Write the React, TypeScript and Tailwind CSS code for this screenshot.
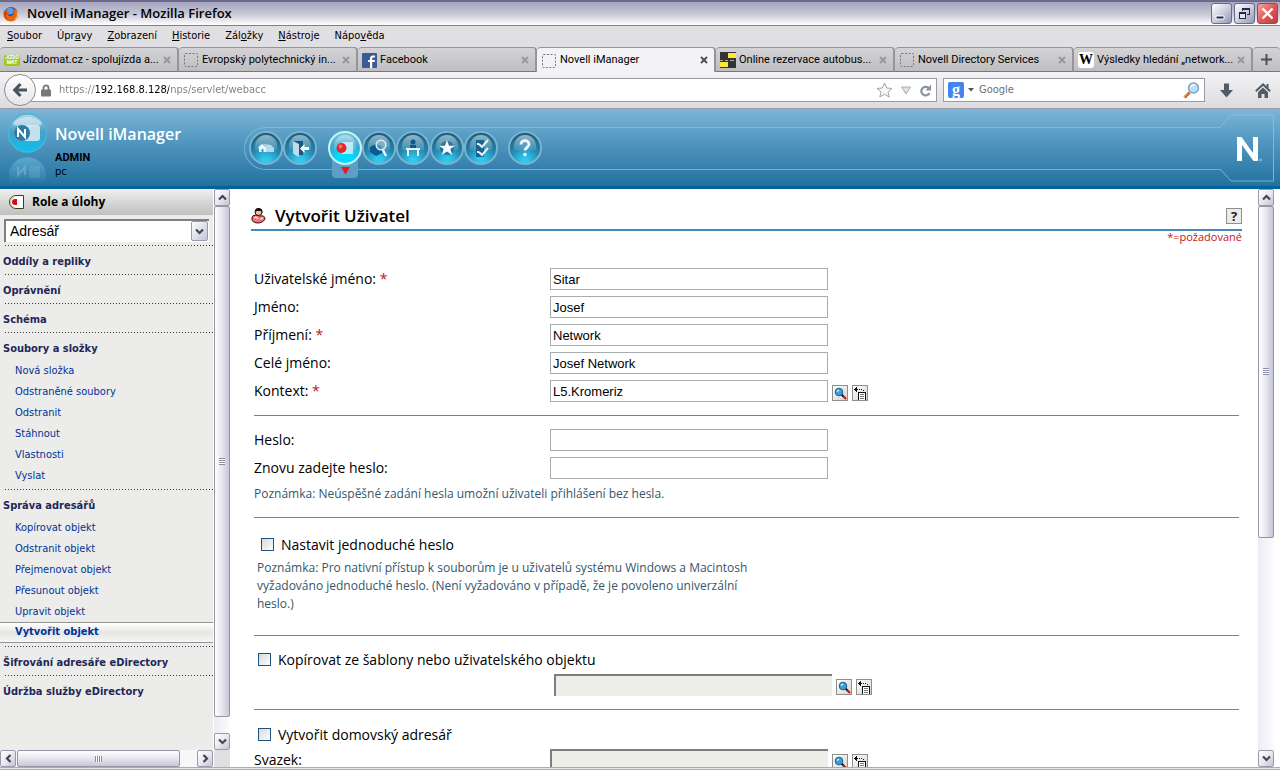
import { useState, type ReactNode } from 'react';

interface Tab {
  title: string;
  icon: ReactNode;
}

interface MenuSection {
  title: string;
  items: string[];
}

const SECTIONS: MenuSection[] = [
  { title: 'Oddíly a repliky', items: [] },
  { title: 'Oprávnění', items: [] },
  { title: 'Schéma', items: [] },
  {
    title: 'Soubory a složky',
    items: ['Nová složka', 'Odstraněné soubory', 'Odstranit', 'Stáhnout', 'Vlastnosti', 'Vyslat'],
  },
  {
    title: 'Správa adresářů',
    items: [
      'Kopírovat objekt',
      'Odstranit objekt',
      'Přejmenovat objekt',
      'Přesunout objekt',
      'Upravit objekt',
      'Vytvořit objekt',
    ],
  },
  { title: 'Šifrování adresáře eDirectory', items: [] },
  { title: 'Údržba služby eDirectory', items: [] },
];

// [before, access key, after]
const MENUS = [
  ['', 'S', 'oubor'],
  ['Úpr', 'a', 'vy'],
  ['', 'Z', 'obrazení'],
  ['', 'H', 'istorie'],
  ['Zál', 'o', 'žky'],
  ['', 'N', 'ástroje'],
  ['Nápo', 'v', 'ěda'],
];

const EmptyIcon = () => (
  <svg width="16" height="16" viewBox="0 0 16 16" fill="none" stroke="#777" className="shrink-0">
    <rect x="1.5" y="1.5" width="13" height="13" rx="1" strokeDasharray="2 1.5" />
  </svg>
);

const TABS: Tab[] = [
  {
    title: 'Jízdomat.cz - spolujízda a...',
    icon: (
      <span className="flex h-[11px] w-4 shrink-0 flex-col items-center justify-center rounded-[2px] bg-[#9ccb1b] text-[5px] leading-[5px] font-bold text-white">
        <span>JIZDO</span>
        <span>MAT</span>
      </span>
    ),
  },
  { title: 'Evropský polytechnický in...', icon: <EmptyIcon /> },
  {
    title: 'Facebook',
    icon: (
      <svg width="15" height="15" viewBox="0 0 15 15" className="shrink-0">
        <rect width="15" height="15" rx="1" fill="#3d5a98" />
        <path d="M8 15V9H6V7h2V5.500C8 3.500 9 2.500 11 2.500h2v2h-1.500c-1 0-1.300.4-1.300 1.200V7H13l-.3 2h-2.500v6z" fill="#fff" />
      </svg>
    ),
  },
  { title: 'Novell iManager', icon: <EmptyIcon /> },
  {
    title: 'Online rezervace autobus...',
    icon: (
      <svg width="16" height="16" viewBox="0 0 16 16" className="shrink-0" shapeRendering="crispEdges">
        <path d="M0 0h16v16H0z" fill="#333" />
        <path d="M8 1h8v5H8zM0 10h8v5H0z" fill="#fde63a" />
        <path d="M0 8h3M5 8h3M10 8h4" stroke="#aaa" />
      </svg>
    ),
  },
  { title: 'Novell Directory Services', icon: <EmptyIcon /> },
  {
    title: 'Výsledky hledání „network...',
    icon: (
      <span className="flex h-4 w-4 shrink-0 items-center justify-center rounded-[3px] bg-white font-['Liberation_Serif',serif] text-[14px] leading-4 font-bold">
        W
      </span>
    ),
  },
];

const Chevron = ({ turn }: { turn: number }) => (
  <svg width="9" height="9" viewBox="0 0 9 9" transform={`rotate(${turn})`}>
    <path d="M1 6.500 4.500 3 8 6.500" fill="none" stroke="#444654" strokeWidth="2.200" />
  </svg>
);

const ARROW =
  'flex h-[17px] w-4 shrink-0 items-center justify-center rounded-[2px] border border-[#9a9aaa] bg-linear-to-br from-white via-[#e9e9f0] to-[#c3c4d4]';

const VerticalScrollbar = ({ thumb, label }: { thumb: string; label: string }) => (
  <div className="flex w-4 shrink-0 flex-col bg-linear-to-r from-[#ececf2] to-[#fcfcfe]">
    <button type="button" aria-label={`${label} nahoru`} className={ARROW}>
      <Chevron turn={0} />
    </button>
    <div className="flex min-h-0 flex-1 flex-col">
      <div
        className={`flex items-center justify-center rounded-[2px] border border-[#9496a6] bg-linear-to-r from-white via-[#e6e6ee] to-[#c6c7d8] ${thumb}`}
      >
        <span className="h-[7px] w-1.5 bg-[repeating-linear-gradient(#8b8da0_0_1px,#fff_1px_2px)]" />
      </div>
    </div>
    <button type="button" aria-label={`${label} dolů`} className={ARROW}>
      <Chevron turn={180} />
    </button>
  </div>
);

const FirefoxLogo = () => (
  <svg width="16" height="16" viewBox="0 0 16 16">
    <circle cx="8" cy="8" r="7" fill="#2b4fa0" />
    <circle cx="7" cy="5" r="3.500" fill="#5c9be0" />
    <path d="M1 3c0 1 0 1 .3 1.500L5 5l1.500 1.500-2 1.500c.5 2 3 3 5 1.500s1.500-5 .5-7c2.500.5 4 3 4 2l.8 1C16 11 12.500 15.500 8 15.500S0 12 .5 8C.6 6 .5 4 1 3z" fill="#e8650d" />
    <path d="M13 4c2 4 1 8-3 10 2.500-.2 5-2.500 5.200-6C15.200 6.500 14 5 13 4z" fill="#fbc32d" />
    <path d="M1 6c1 0 2.500 0 3.500 1L3 8.500C2.500 10 3.500 12 5 13 2.500 12.500.800 9.500 1 6z" fill="#c63a10" />
  </svg>
);

const TitleBar = () => (
  <header className="flex h-[26px] items-center border-t-2 border-b border-t-[#6f6a8b] border-b-[#7c7c96] bg-linear-to-b from-[#a5a4c0] via-[#c6c6d4] to-white pl-[3px]">
    <FirefoxLogo />
    <h1 className="flex-1 pl-2 font-['Open_Sans',sans-serif] text-[13px] font-semibold">
      Novell iManager - Mozilla Firefox
    </h1>
    <div className="flex gap-[2px] pr-[2px]">
      <button type="button" aria-label="Minimalizovat" className="flex h-[21px] w-[21px] items-center justify-center rounded-[3px] border border-[#686b8b] bg-linear-to-br from-white via-[#cfd0e0] to-[#9495b6]">
        <svg width="15" height="15" viewBox="0 0 15 15"><path d="M2 10h8v3H2z" fill="#25284e" stroke="#fff" /></svg>
      </button>
      <button type="button" aria-label="Obnovit" className="flex h-[21px] w-[21px] items-center justify-center rounded-[3px] border border-[#686b8b] bg-linear-to-br from-white via-[#cfd0e0] to-[#9495b6]">
        <svg width="15" height="15" viewBox="0 0 15 15" fill="none" stroke="#25284e" shapeRendering="crispEdges">
          <path d="M5.500 5V2.500h7v6H10M5 3h8" />
          <path d="M2.500 6.500h6v6h-6zM2 7h7" fill="#e5e5ef" />
        </svg>
      </button>
      <button type="button" aria-label="Zavřít" className="flex h-[21px] w-[21px] items-center justify-center rounded-[3px] border border-[#9c4550] bg-linear-to-br from-[#f2a5a0] via-[#e0575a] to-[#b93a44]">
        <svg width="15" height="15" viewBox="0 0 15 15"><path d="m2.500 2.500 10 10m0-10-10 10" stroke="#fff" strokeWidth="2.400" /></svg>
      </button>
    </div>
  </header>
);

const MenuBar = () => (
  <nav className="flex h-[21px] items-center gap-[15px] pl-[7px]">
    {MENUS.map(([before, key, after]) => (
      <button key={before + key} type="button">
        {before}
        <u>{key}</u>
        {after}
      </button>
    ))}
  </nav>
);

const TabStrip = () => (
  <div className="flex h-[25px] font-['Roboto',sans-serif]" role="tablist">
    {TABS.map((tab) => {
      const active = tab.title === 'Novell iManager';
      return (
        <div
          key={tab.title}
          className={`flex min-w-0 flex-1 items-center rounded-t-[4px] border-t border-r-2 border-[#94949a] pl-1 ${
            active ? 'bg-[#f3f3f5]' : 'border-b border-b-[#77777d] bg-linear-to-b from-[#d4d4d6] to-[#bebec0]'
          }`}
        >
          <button type="button" role="tab" aria-selected={active} className="flex min-w-0 flex-1 items-center gap-[3px] pt-px">
            {tab.icon}
            <span className="whitespace-nowrap">{tab.title}</span>
          </button>
          <button type="button" aria-label={`Zavřít ${tab.title}`} className="mr-1.5 shrink-0">
            <svg width="8" height="8" viewBox="0 0 8 8">
              <path d="m1 1 6 6m0-6-6 6" stroke={active ? '#4c4c4c' : '#969698'} strokeWidth="1.800" />
            </svg>
          </button>
        </div>
      );
    })}
    <button
      type="button"
      aria-label="Nový panel"
      className="flex w-[27px] items-center justify-center rounded-t-[4px] border-t border-b border-[#94949a] border-b-[#77777d] bg-linear-to-b from-[#d4d4d6] to-[#bebec0]"
    >
      <svg width="11" height="11" viewBox="0 0 11 11"><path d="M5.500 0v11M0 5.500h11" stroke="#48505a" strokeWidth="2" /></svg>
    </button>
  </div>
);

const NavBar = () => (
  <div className="flex h-[37px] items-center border-b border-[#9b9ba1] bg-linear-to-b from-[#f3f3f5] to-[#dcdce0] pl-1">
    <button
      type="button"
      aria-label="Zpět"
      className="z-10 -mr-2 flex h-8 w-8 shrink-0 items-center justify-center rounded-full border border-[#8b8b93] bg-linear-to-b from-white to-[#e6e6ea]"
    >
      <svg width="16" height="16" viewBox="0 0 16 16" fill="none" stroke="#48545f" strokeWidth="3.200">
        <path d="M8.500 2 2.800 8l5.700 6M3 8h12" />
      </svg>
    </button>
    <div className="flex h-6 min-w-0 flex-1 items-center gap-2 border border-[#9b9ba1] bg-white pr-1 pl-3">
      <svg width="10" height="13" viewBox="0 0 10 13" className="shrink-0">
        <path d="M2.500 6V3.800a2.500 2.500 0 0 1 5 0V6" fill="none" stroke="#777" strokeWidth="1.800" />
        <rect y="5.500" width="10" height="7" rx="1" fill="#777" />
      </svg>
      <input
        aria-label="Adresa"
        defaultValue="https://192.168.8.128/nps/servlet/webacc"
        className="min-w-0 flex-1 bg-[linear-gradient(90deg,#7d7d7d_37px,#000_37px,#000_110px,#7d7d7d_110px)] bg-clip-text text-transparent outline-none"
      />
      <button type="button" aria-label="Záložka">
        <svg width="17" height="16" viewBox="0 0 17 16">
          <path d="m8.500 1 2.200 5 5.300.5-4 3.500 1.200 5-4.700-2.700L3.800 15 5 10 1 6.500 6.300 6z" fill="#f8f8f8" stroke="#a4a4a8" />
        </svg>
      </button>
      <button type="button" aria-label="Historie adres">
        <svg width="10" height="9" viewBox="0 0 10 9"><path d="M.5 1h9L5 8z" fill="#dde1e8" stroke="#a8adb5" /></svg>
      </button>
      <button type="button" aria-label="Obnovit stránku">
        <svg width="13" height="13" viewBox="0 0 13 13">
          <path d="M10 4.500A4.300 4.300 0 1 0 10.500 9" fill="none" stroke="#8a949e" strokeWidth="2.200" />
          <path d="M12 .5v6H6.500z" fill="#8a949e" />
        </svg>
      </button>
    </div>
    <div className="ml-1.5 flex h-6 w-[262px] shrink-0 items-center border border-[#9b9ba1] bg-white px-1">
      <span className="flex h-4 w-4 items-center justify-center rounded-[2px] bg-[#4384f0] font-['Liberation_Serif',serif] text-[16px] leading-3 font-bold text-white">
        g
      </span>
      <svg width="14" height="5" viewBox="0 0 14 5"><path d="M4 0h6L7 3.500z" fill="#555" /></svg>
      <input aria-label="Hledat" placeholder="Google" className="min-w-0 flex-1 pl-[1px] outline-none placeholder:text-[#6f6f6f]" />
      <button type="button" aria-label="Spustit hledání">
        <svg width="17" height="17" viewBox="0 0 17 17">
          <path d="m1.500 15.500 5-5" stroke="#c0632b" strokeWidth="3" />
          <path d="m1 15 4-4" stroke="#f2a65c" />
          <circle cx="10.500" cy="6" r="5" fill="#b7e0f9" stroke="#7d9fc2" strokeWidth="1.400" />
          <path d="M8 5a3 3 0 0 1 4-2" fill="none" stroke="#fff" strokeWidth="1.500" />
        </svg>
      </button>
    </div>
    <button type="button" aria-label="Stahování" className="ml-[14px]">
      <svg width="15" height="15" viewBox="0 0 15 15"><path d="M5 .5h5V7h4l-6.500 7.500L1 7h4z" fill="#525c66" /></svg>
    </button>
    <button type="button" aria-label="Domů" className="mr-[9px] ml-[21px]">
      <svg width="16" height="15" viewBox="0 0 16 15">
        <path d="M.8 8.300 8 1.500l7.200 6.800M12.500 1v4" fill="none" stroke="#525c66" strokeWidth="2" />
        <path d="m8 4.500 5 4.700V15H9.500v-4h-3v4H3V9.200z" fill="#525c66" />
      </svg>
    </button>
  </div>
);

interface ToolProps {
  label: string;
  active?: boolean;
  children: ReactNode;
}

const Tool = ({ label, active, children }: ToolProps) => (
  <button
    type="button"
    aria-label={label}
    className={`relative flex h-[34px] w-[34px] shrink-0 items-center justify-center rounded-full border-2 ${
      active
        ? 'border-[#c5f4f5] bg-[radial-gradient(circle_at_50%_90%,#00dcff_25%,#3aa9cf_60%,#9cd3df_100%)]'
        : 'border-[#78b4d2] bg-[radial-gradient(circle_at_50%_95%,#2fc9ee_10%,#2684ab_50%,#25698a_85%)] shadow-[inset_0_1px_1px_#17506d]'
    }`}
  >
    <span className="absolute inset-x-1 top-[2px] h-[15px] rounded-t-full rounded-b-[8px] bg-linear-to-b from-white/50 to-white/10" />
    <svg width="22" height="22" viewBox="0 0 22 22" className="relative">
      {children}
    </svg>
    {active && (
      <span className="absolute top-[27px] left-[2px] -z-10 flex h-[18px] w-[26px] items-end justify-center rounded-b-[4px] bg-[#5e9ec4] pb-[3px]">
        <svg width="9" height="8" viewBox="0 0 9 8"><path d="M0 0h9L4.500 7.500z" fill="#f01520" /></svg>
      </span>
    )}
  </button>
);

const BrandLogo = () => (
  <svg width="42" height="76" viewBox="0 0 42 76" className="shrink-0">
    <defs>
      <linearGradient id="orb" x1="0" y1="0" x2="0" y2="1">
        <stop offset="0" stopColor="#b9d9e6" />
        <stop offset="0.450" stopColor="#4e9fc4" />
        <stop offset="1" stopColor="#08c0f2" />
      </linearGradient>
      <linearGradient id="fade" x1="0" y1="0" x2="0" y2="1">
        <stop offset="0" stopColor="#62b5da" stopOpacity="0.700" />
        <stop offset="1" stopColor="#62b5da" stopOpacity="0" />
      </linearGradient>
    </defs>
    <circle cx="20.500" cy="23" r="19" fill="url(#orb)" stroke="#48b6dc" strokeWidth="1.500" />
    <path d="M6 14C9 5 32 5 35 14c-5 4-24 4-29 0z" fill="#fff" opacity="0.450" />
    <path d="M15 15h15q3 0 3 3v10q0 3-3 3H15a8 8 0 0 1 0-16z" fill="#d9ecf3" opacity="0.850" />
    <circle cx="15" cy="23" r="8" fill="#2b7ba6" />
    <path d="M11 27v-8l7 8v-8" fill="none" stroke="#fff" strokeWidth="2" />
    <path d="M2 62a19 19 0 0 1 37 0v12H3z" fill="url(#fade)" />
    <path d="M11 57v8l7-8v8" fill="none" stroke="#8fc2da" strokeWidth="2" opacity="0.450" />
    <path d="M22 56h11v12H22z" fill="#8fc2da" opacity="0.200" />
  </svg>
);

const ManagerHeader = () => (
  <div className="flex h-20 shrink-0 items-center border-b-[3px] border-[#00629b] bg-linear-to-b from-[#7bb6d8] via-[#4a92bb] to-[#21719f] pt-px">
    <div className="pl-[7px]">
      <BrandLogo />
    </div>
    <div className="w-[195px] shrink-0 pt-[3px] pl-[6px]">
      <h2 className="font-['Open_Sans',sans-serif] text-[16px] leading-6 font-semibold text-white">Novell iManager</h2>
      <p className="pt-[5px] font-['Roboto',sans-serif] text-[11px] leading-[14px] font-bold">ADMIN</p>
      <p className="text-[11px] leading-[13px]">pc</p>
    </div>
    <div className="isolate flex h-[43px] flex-1 items-center rounded-l-full border-y border-l border-[#8fc1dc]/70 pl-1">
      <Tool label="Domů">
        <path d="M3 10.500 7 7l4 3.500V15H8.500v-3h-2v3H4v-4z" fill="#fff" opacity="0.900" />
        <path d="m8 7 8 1 3 3v4h-8v-5z" fill="#cce3ef" opacity="0.850" />
      </Tool>
      <Tool label="Konec">
        <path d="M4 4h10v14H4z" fill="#12588a" />
        <path d="m4 4 6 3v13l-6-3z" fill="#c1dbe9" />
        <path d="M11 11.500 15.500 7v3H20v3h-4.500v3z" fill="#fff" />
      </Tool>
      <span className="w-[11px] shrink-0" />
      <Tool label="Role a úlohy" active>
        <path d="M8 5h11v12H8z" fill="#d9f4fa" opacity="0.800" />
        <circle cx="7.500" cy="11" r="5" fill="#e6262c" />
        <circle cx="6.500" cy="9.500" r="2" fill="#ff8d86" opacity="0.700" />
      </Tool>
      <Tool label="Zobrazit objekty">
        <path d="m2 10 6-3 6 2v7l-6 3-6-4z" fill="#0e5a90" />
        <circle cx="13" cy="8" r="4.800" fill="#9ac3dc" fillOpacity="0.500" stroke="#dcecf4" strokeWidth="1.600" />
        <path d="m15 13 3 6" stroke="#e7f3f8" strokeWidth="2.400" />
      </Tool>
      <Tool label="Konfigurovat">
        <circle cx="11" cy="5" r="2.500" fill="#0e5a90" />
        <path d="M8 8h6v4H8z" fill="#0e5a90" />
        <path d="M4 11h14v2H4zM5 13h2v6H5zM15 13h2v6h-2z" fill="#e7f3f8" />
      </Tool>
      <Tool label="Oblíbené">
        <circle cx="11" cy="11" r="7" fill="#115689" opacity="0.600" />
        <path d="m11 3 2 5.800h6L14.300 12l2 6-5.300-3.600L5.700 18l2-6L3 8.800h6z" fill="#f5fafc" />
      </Tool>
      <Tool label="Předvolby">
        <path d="M6 3h8v17H6z" fill="#115689" opacity="0.850" />
        <path d="m9 7 3 3 6-7M9 15l3 3 6-7M7 7h2M7 15h2" fill="none" stroke="#e7f3f8" strokeWidth="2" />
      </Tool>
      <span className="w-[10px] shrink-0" />
      <Tool label="Nápověda">
        <path d="M7 7.500C7 2.500 15 2.500 15 7.200c0 3-4 3.300-4 6.300" fill="none" stroke="#f0f8fb" strokeWidth="2.800" />
        <circle cx="11" cy="17.500" r="1.800" fill="#f0f8fb" />
      </Tool>
    </div>
    <svg width="60" height="68" viewBox="0 0 60 68" className="shrink-0" fill="none">
      <path d="M0 13 11 1h42.500v66H11L0 55" stroke="#8fc1dc" strokeOpacity="0.800" />
      <path d="M17 47V23h4.500L33 39V23h5v24h-4.500L22 31v16z" fill="#fff" />
      <circle cx="40.500" cy="46" r="1" stroke="#9dc9df" />
    </svg>
  </div>
);

const Sidebar = () => {
  const [selected, setSelected] = useState('Vytvořit objekt');

  return (
    <aside className="flex w-[230px] shrink-0 bg-[#e0dfe3]">
      <div className="flex min-w-0 flex-1 flex-col">
        <div className="min-h-0 flex-1 overflow-hidden border-r border-white bg-[#ececea]">
          <div className="flex h-[26px] items-center gap-2 bg-linear-to-b from-[#eff0ef] to-[#bec1be] pl-[9px]">
            <svg width="15" height="14" viewBox="0 0 15 14">
              <path d="M7 .5h7.500v13H7a6.500 6.500 0 0 1 0-13z" fill="#fff" stroke="#3f3b1e" />
              <path d="M5 1.500a6 6 0 0 0 0 11" fill="none" stroke="#c9b98f" />
              <path d="M8 4v6H6a3 3 0 0 1 0-6z" fill="#d90814" />
            </svg>
            <h2 className="font-['Open_Sans',sans-serif] text-[12px] font-bold">Role a úlohy</h2>
          </div>
          <div className="relative mx-1 mt-1 h-[23px]">
            <select
              aria-label="Kategorie"
              className="h-full w-full appearance-none border-t-2 border-l-2 border-[#7f7f83] bg-white pl-1 font-['Liberation_Sans',sans-serif] text-[14px] outline-none"
            >
              <option>Adresář</option>
            </select>
            <span className="pointer-events-none absolute top-[2px] right-[1px] flex h-5 w-[17px] items-center justify-center rounded-[2px] border border-[#9a9aaa] bg-linear-to-br from-white to-[#c3c4d4]">
              <Chevron turn={180} />
            </span>
          </div>
          <div className="pt-[3px]">
            {SECTIONS.map((section) => (
              <section
                key={section.title}
                className={`bg-[repeating-linear-gradient(90deg,#333_0_1px,transparent_1px_3px)] bg-[length:100%_1px] bg-[position:5px_0] bg-no-repeat pt-px ${
                  section.items.length ? 'pb-[3px]' : 'pb-px'
                }`}
              >
                <h3 className="h-[27px] pt-[6px] pl-[3px] text-[11px] leading-5 font-bold text-[#1f2757]">
                  {section.title}
                </h3>
                {section.items.length > 0 && (
                  <ul>
                    {section.items.map((item) => (
                      <li key={item}>
                        <a
                          href="#"
                          onClick={() => {
                            setSelected(item);
                          }}
                          className={`block h-[21px] pl-[15px] text-[#003399] ${
                            item === selected
                              ? 'border-y border-[#939393] bg-linear-to-b from-white via-[#e6e6e4] to-[#f6f6f5] leading-[18px] font-bold'
                              : 'leading-[21px]'
                          }`}
                        >
                          {item}
                        </a>
                      </li>
                    ))}
                  </ul>
                )}
              </section>
            ))}
          </div>
        </div>
        <div className="flex h-[17px] shrink-0 bg-[#f7f7fa]">
          <button type="button" aria-label="Nabídka vlevo" className={ARROW}>
            <Chevron turn={270} />
          </button>
          <div className="flex flex-1 pl-px">
            <div className="flex flex-[162] items-center justify-center rounded-[2px] border border-[#9496a6] bg-linear-to-b from-white via-[#e6e6ee] to-[#c6c7d8]">
              <span className="h-1.5 w-[7px] bg-[repeating-linear-gradient(90deg,#8b8da0_0_1px,#fff_1px_2px)]" />
            </div>
            <div className="flex-[17]" />
          </div>
          <button type="button" aria-label="Nabídka vpravo" className={ARROW}>
            <Chevron turn={90} />
          </button>
          <span className="w-px shrink-0 bg-white" />
        </div>
      </div>
      <div className="flex pb-[17px]">
        <VerticalScrollbar thumb="h-[97%]" label="Nabídka" />
      </div>
    </aside>
  );
};

const ICON_BUTTON = 'h-4 w-4 shrink-0 border border-[#8f8f8b] bg-linear-to-br from-white to-[#d4d4d0]';

const ObjectButtons = () => (
  <div className="flex gap-1 pt-[5px] pl-1">
    <button type="button" aria-label="Vybrat objekt" className={ICON_BUTTON}>
      <svg width="14" height="14" viewBox="0 0 14 14">
        <path d="m8.500 8.500 2 2" stroke="#111" strokeWidth="2" />
        <path d="m10 10 3 3" stroke="#b51414" strokeWidth="2" />
        <circle cx="6" cy="6" r="3.800" fill="#39a0d8" stroke="#1f5c8c" />
        <path d="M4 5.500 6 4" stroke="#d5f0ff" strokeWidth="1.500" />
      </svg>
    </button>
    <button type="button" aria-label="Historie objektů" className={ICON_BUTTON}>
      <svg width="14" height="14" viewBox="0 0 14 14" shapeRendering="crispEdges">
        <path d="M1 3h4v1H1zM2 2h1v3H2zM3 1h1v5H3zM6 3h1v1H6zM8 3h1v1H8zM10 4h1v1h-1z" fill="#111" />
        <path d="M5 6h8v8H5z" fill="#fff" />
        <path d="M5 6h8v8h-1V7H6v7H5z" fill="#111" />
        <path d="M7 8h4v1H7zM7 10h4v1H7zM7 12h4v1H7z" fill="#777" />
      </svg>
    </button>
  </div>
);

interface FieldProps {
  id: string;
  label: string;
  value?: string;
  type?: string;
  required?: boolean;
  disabled?: boolean;
  picker?: boolean;
}

const Field = ({ id, label, value, type = 'text', required, disabled, picker }: FieldProps) => (
  <div className="flex h-[22px]">
    <label htmlFor={id} className="w-[296px] shrink-0 leading-[22px]">
      {label} {required && <span className="text-[#c41414]">*</span>}
    </label>
    <input
      id={id}
      type={type}
      defaultValue={value}
      disabled={disabled}
      className={`h-[22px] w-[278px] font-['Liberation_Sans',sans-serif] text-[13px] ${
        disabled ? 'border-t-2 border-l-2 border-[#7d7d7b] bg-[#eeeee9]' : 'border border-[#a5acb2] bg-white px-[2px]'
      }`}
    />
    {picker && <ObjectButtons />}
  </div>
);

const CHECKBOX =
  'h-[13px] w-[13px] shrink-0 appearance-none border border-[#1d5283] bg-linear-to-br from-[#d8d8d2] to-white checked:bg-[#1d5283]';

const Rule = () => <hr className="border-t border-[#808080]" />;

const CreateUser = () => (
  <main className="min-w-0 flex-1 overflow-hidden bg-white pr-4 pl-[21px] font-['Open_Sans',sans-serif] text-[14px]">
    <div className="flex h-[42px] items-center border-b-2 border-[#4688b8] pt-[13px]">
      <svg width="15" height="17" viewBox="0 0 15 17">
        <path d="M1 11q0-3 4-3l4 1q5-1 5 3-1 3-6 4-6 0-7-3z" fill="#f0737c" stroke="#3c1111" />
        <path d="M3 11q2-2 4 1M9 12l3-1" stroke="#ffd0d0" strokeWidth="1.500" fill="none" />
        <circle cx="7.500" cy="5" r="3.500" fill="#f5bf92" stroke="#201008" />
        <path d="M4 5q0-4 4-4 4 1 3.500 5L10 4H6z" fill="#14100e" />
      </svg>
      <h1 className="flex-1 pl-[9px] text-[17px] font-semibold">Vytvořit Uživatel</h1>
      <button
        type="button"
        aria-label="Nápověda ke stránce"
        className="h-4 w-4 border border-[#8f8f8b] bg-[#ebebe8] text-[13px] leading-[14px] font-bold text-[#222]"
      >
        ?
      </button>
    </div>
    <p className="text-right text-[11px] leading-3 text-[#c41414]">*=požadované</p>
    <form className="pt-[25px] pr-[3px] pl-[3px]">
      <div className="flex flex-col gap-[6px] pb-[13px]">
        <Field id="user" label="Uživatelské jméno:" value="Sitar" required />
        <Field id="first" label="Jméno:" value="Josef" />
        <Field id="last" label="Příjmení:" value="Network" required />
        <Field id="full" label="Celé jméno:" value="Josef Network" />
        <Field id="context" label="Kontext:" value="L5.Kromeriz" required picker />
      </div>
      <Rule />
      <div className="flex flex-col gap-[6px] pt-[13px]">
        <Field id="password" label="Heslo:" type="password" />
        <Field id="password2" label="Znovu zadejte heslo:" type="password" />
      </div>
      <p className="pt-[6px] pb-[14px] text-[12px] leading-[18px] text-[#35566b]">
        Poznámka: Neúspěšné zadání hesla umožní uživateli přihlášení bez hesla.
      </p>
      <Rule />
      <div className="flex h-10 items-center gap-[7px] pt-[13px] pl-[7px]">
        <input id="simple" type="checkbox" className={CHECKBOX} />
        <label htmlFor="simple">Nastavit jednoduché heslo</label>
      </div>
      <p className="w-[510px] pt-px pb-[22px] pl-[3px] text-[12px] leading-[18px] text-[#35566b]">
        Poznámka: Pro nativní přístup k souborům je u uživatelů systému Windows a Macintosh vyžadováno jednoduché
        heslo. (Není vyžadováno v případě, že je povoleno univerzální heslo.)
      </p>
      <Rule />
      <div className="flex h-[38px] items-center gap-[7px] pt-[9px] pl-1">
        <input id="template" type="checkbox" className={CHECKBOX} />
        <label htmlFor="template">Kopírovat ze šablony nebo uživatelského objektu</label>
      </div>
      <div className="flex h-[22px] pl-[300px]">
        <input
          aria-label="Šablona"
          disabled
          className="h-[22px] w-[278px] border-t-2 border-l-2 border-[#7d7d7b] bg-[#eeeee9]"
        />
        <ObjectButtons />
      </div>
      <div className="pt-[13px]">
        <Rule />
      </div>
      <div className="flex h-[39px] items-center gap-[7px] pt-[9px] pl-1">
        <input id="home" type="checkbox" className={CHECKBOX} />
        <label htmlFor="home">Vytvořit domovský adresář</label>
      </div>
      <Field id="volume" label="Svazek:" disabled picker />
    </form>
  </main>
);

export default function App() {
  return (
    <div className="flex h-screen flex-col overflow-hidden bg-[#e0dfe3] font-['DejaVu_Sans_Condensed','DejaVu_Sans',sans-serif] text-[11px] text-black">
      <TitleBar />
      <MenuBar />
      <TabStrip />
      <NavBar />
      <ManagerHeader />
      <div className="flex min-h-0 flex-1 bg-white pr-1.5">
        <Sidebar />
        <CreateUser />
        <VerticalScrollbar thumb="h-[61%]" label="Obsah" />
      </div>
      <div className="h-[3px] shrink-0 border-y border-[#a9aac4] bg-[#e8e8f2]" />
    </div>
  );
}
